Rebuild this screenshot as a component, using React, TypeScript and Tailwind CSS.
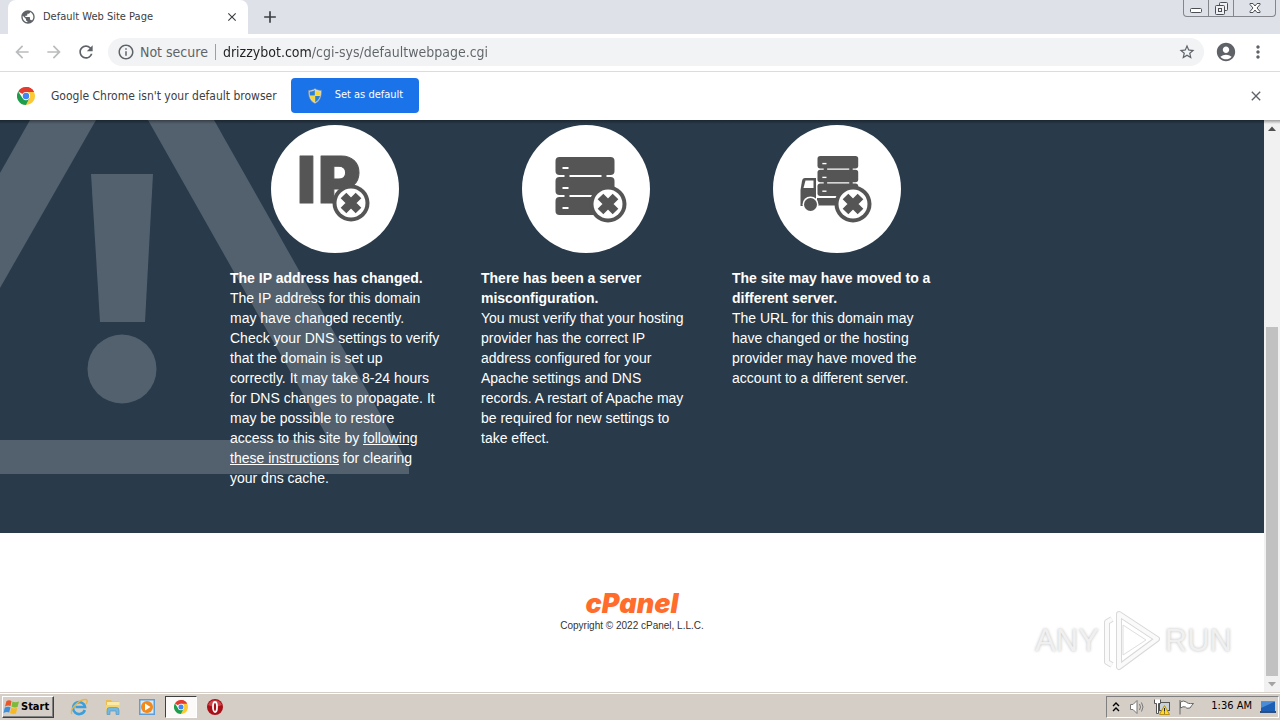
import React from 'react';
import {
  MdAccountCircle,
  MdAdd,
  MdArrowBack,
  MdArrowForward,
  MdClose,
  MdInfoOutline,
  MdMoreVert,
  MdPublic,
  MdRefresh,
  MdStarBorder,
} from 'react-icons/md';

const ChromeLogo = ({ className }: { className?: string }) => (
  <svg viewBox="0 0 48 48" className={className} aria-hidden="true">
    <path d="M24 24 L3.2 12 A24 24 0 0 1 44.8 12 Z" fill="#e33b2e" />
    <path d="M24 13 H45.3 L44.8 12 A24 24 0 0 0 24 0 Z" fill="#e33b2e" />
    <path d="M33.5 29.5 L24 48 A24 24 0 0 0 45.3 13 H24 Z" fill="#fcc934" />
    <path d="M14.5 29.5 L3.2 12 A24 24 0 0 0 24 48 L33.5 29.5 Z" fill="#1e9e4a" />
    <circle cx="24" cy="24" r="11" fill="#fff" />
    <circle cx="24" cy="24" r="8.6" fill="#4285f4" />
  </svg>
);

const ShieldIcon = () => (
  <svg viewBox="0 0 16 16" className="size-4" aria-hidden="true">
    <path d="M8 0.5 C10 2 12.5 2.4 14.5 2.4 C14.5 9 13 13 8 15.5 C3 13 1.5 9 1.5 2.4 C3.5 2.4 6 2 8 0.5Z" fill="#d5dbe2" stroke="#7c8794" strokeWidth="0.6" />
    <path d="M7.8 2 V7.6 H2.9 C2.7 6 2.6 5 2.6 3.6 C4.6 3.5 6.3 3 7.8 2Z" fill="#2a7fd4" />
    <path d="M8.2 2 V7.6 H13.1 C13.3 6 13.4 5 13.4 3.6 C11.4 3.5 9.7 3 8.2 2Z" fill="#f8d731" />
    <path d="M7.8 8 V14.2 C4.9 12.7 3.6 10.8 3 8Z" fill="#f8d731" />
    <path d="M8.2 8 V14.2 C11.1 12.7 12.4 10.8 13 8Z" fill="#2a7fd4" />
  </svg>
);

const CrossBadge = () => (
  <g>
    <circle cx="80" cy="78" r="18.5" fill="#555" />
    <circle cx="80" cy="78" r="14.5" fill="#fff" />
    <path d="M72.5 70.5 L87.5 85.5 M87.5 70.5 L72.5 85.5" stroke="#555" strokeWidth="8" />
  </g>
);

const IpIcon = () => (
  <svg viewBox="0 0 128 128" className="size-32" aria-hidden="true">
    <g fill="#555" fontFamily="Inter, sans-serif" fontWeight="900" fontSize="65" stroke="#555" strokeLinejoin="round">
      <text x="26" y="78">I</text>
      <text x="47" y="78">P</text>
    </g>
    <CrossBadge />
  </svg>
);

const ServerStack = () => (
  <g>
    <path d="M9 14 H14 V44 H9Z M46 14 H51 V44 H46Z" fill="#555" />
    {[0, 20, 40].map((y) => (
      <g key={y}>
        <rect x="0" y={y} width="59" height="18" rx="4" fill="#555" />
        <rect x="7" y={y + 10} width="6" height="2" fill="#fff" />
      </g>
    ))}
  </g>
);

const ServerIcon = () => (
  <svg viewBox="0 0 128 128" className="size-32" aria-hidden="true">
    <g transform="translate(33.5 32)">
      <ServerStack />
    </g>
    <g transform="translate(6 1)">
      <CrossBadge />
    </g>
  </svg>
);

const TruckIcon = () => (
  <svg viewBox="0 0 128 128" className="size-32" aria-hidden="true">
    <g transform="translate(44.5 31) scale(0.69)">
      <ServerStack />
    </g>
    <path d="M44 73 H70 V80.5 H44Z" fill="#555" />
    <path d="M32 53 H43 V81 H27.5 V65 L29 56 Q29.5 53 32 53Z" fill="#555" />
    <path d="M32.5 55.5 H40.5 V63 H30.5Z" fill="#fff" />
    <circle cx="37.5" cy="79.5" r="8" fill="#fff" />
    <circle cx="37.5" cy="79.5" r="6.5" fill="#555" />
    <g transform="translate(0 1)">
      <CrossBadge />
    </g>
  </svg>
);

const reasons = [
  {
    title: 'The IP address has changed.',
    icon: <IpIcon />,
    body: (
      <>
        The IP address for this domain may have changed recently. Check your DNS settings to verify that the domain is
        set up correctly. It may take 8-24 hours for DNS changes to propagate. It may be possible to restore access to
        this site by{' '}
        <a href="#instructions" className="underline">
          following these instructions
        </a>{' '}
        for clearing your dns cache.
      </>
    ),
  },
  {
    title: 'There has been a server misconfiguration.',
    icon: <ServerIcon />,
    body: 'You must verify that your hosting provider has the correct IP address configured for your Apache settings and DNS records. A restart of Apache may be required for new settings to take effect.',
  },
  {
    title: 'The site may have moved to a different server.',
    icon: <TruckIcon />,
    body: 'The URL for this domain may have changed or the hosting provider may have moved the account to a different server.',
  },
];

const WindowButtons = () => (
  <div className="mr-1 flex h-[17px] rounded-b border border-t-0 border-[#84868c] text-[#4b4e55]">
    <button aria-label="Minimize" className="flex w-[25px] items-center justify-center border-r border-[#84868c]">
      <svg viewBox="0 0 12 12" className="size-3" fill="none" stroke="currentColor">
        <rect x="0.5" y="6.5" width="11" height="4" rx="1" fill="#fff" />
      </svg>
    </button>
    <button aria-label="Restore" className="flex w-[25px] items-center justify-center border-r border-[#84868c]">
      <svg viewBox="0 0 13 13" className="size-[13px]" fill="#eef0f4" stroke="currentColor">
        <rect x="4.5" y="0.5" width="8" height="8" rx="1" />
        <rect x="0.5" y="3.5" width="9" height="9" rx="1" />
        <rect x="3.5" y="6.5" width="3" height="3" />
      </svg>
    </button>
    <button aria-label="Close window" className="flex w-[41px] items-center justify-center">
      <svg viewBox="0 0 12 12" className="size-3" fill="#fff" stroke="currentColor">
        <path d="M1 1.5 H4 L6 4 L8 1.5 H11 V2.5 L8 6 L11 9.5 V10.5 H8 L6 8 L4 10.5 H1 V9.5 L4 6 L1 2.5Z" />
      </svg>
    </button>
  </div>
);

const TabStrip = () => (
  <div className="flex h-[34px] items-start bg-[#dee1e8] pl-2">
    <div className="flex h-[34px] w-60 items-center rounded-t-lg bg-white pr-2 pl-3">
      <MdPublic className="size-4 shrink-0 text-[#5f6368]" />
      <span className="ml-[7px] flex-1 text-[11px] text-[#3c4043]">Default Web Site Page</span>
      <button aria-label="Close tab" className="flex size-4 items-center justify-center text-[#3c4043]">
        <MdClose className="size-[14px] stroke-current" />
      </button>
    </div>
    <button aria-label="New tab" className="ml-3 flex h-[34px] items-center text-[#3c4043]">
      <MdAdd className="size-5" />
    </button>
    <div className="flex-1" />
    <WindowButtons />
  </div>
);

const Toolbar = () => (
  <div className="flex h-[38px] items-center border-b border-[#dcdcdc] bg-white px-3 pb-px">
    <button aria-label="Back" className="mr-3 text-[#babcbe]">
      <MdArrowBack className="size-5" />
    </button>
    <button aria-label="Forward" className="mr-3 text-[#babcbe]">
      <MdArrowForward className="size-5" />
    </button>
    <button aria-label="Reload" className="mr-3 text-[#5f6368]">
      <MdRefresh className="size-5 stroke-current" />
    </button>
    <div className="flex h-7 flex-1 items-center rounded-full bg-[#f1f3f4] px-2 text-sm">
      <MdInfoOutline className="size-5 shrink-0 p-px text-[#5f6368]" />
      <span className="ml-1 text-[#5f6368]">Not secure</span>
      <div className="mx-[7px] h-4 w-px bg-[#9aa0a6]" />
      <input
        type="text"
        aria-label="Address"
        defaultValue="drizzybot.com/cgi-sys/defaultwebpage.cgi"
        className="min-w-0 flex-1 bg-[linear-gradient(to_right,#202124_88px,#5f6368_88px)] bg-clip-text text-transparent outline-none"
      />
      <button aria-label="Bookmark this page" className="text-[#5f6368]">
        <MdStarBorder className="size-[18px]" />
      </button>
    </div>
    <button aria-label="Profile" className="ml-[11px] text-[#5f6368]">
      <MdAccountCircle className="size-[22px]" />
    </button>
    <button aria-label="Menu" className="ml-[11px] text-[#5f6368]">
      <MdMoreVert className="size-5" />
    </button>
  </div>
);

const InfoBar = () => (
  <div className="flex h-12 items-center bg-white pr-4 pb-px pl-[17px] text-[#3c4043]">
    <ChromeLogo className="size-[18px]" />
    <span className="ml-4 text-xs">Google Chrome isn't your default browser</span>
    <button className="ml-[14px] flex h-[35px] items-center gap-3 rounded bg-[#1a73e8] px-4 text-[11px] text-white">
      <ShieldIcon />
      Set as default
    </button>
    <div className="flex-1" />
    <button aria-label="Dismiss" className="text-[#5f6368]">
      <MdClose className="size-4 stroke-current" />
    </button>
  </div>
);

const WarningSign = () => (
  <svg viewBox="0 0 410 354" className="absolute top-0 left-0 h-[354px] w-[410px]" fill="#53616e" aria-hidden="true">
    <path d="M30 0 H96 L0 168 V53Z" />
    <path d="M148 0 H214 L409 345 V354 H0 V320 H329Z" />
    <path d="M91 54 H153 L145 202 H100Z" />
    <circle cx="122" cy="249" r="34.5" />
  </svg>
);

const Scrollbar = () => (
  <div className="flex w-4 shrink-0 flex-col items-center bg-[#f1f1f1]">
    <svg viewBox="0 0 16 16" className="size-4" fill="#505050">
      <path d="M4 11 L8 6.5 L12 11Z" />
    </svg>
    <div className="flex-1" />
    <div className="h-[349px] w-3 bg-[#c1c1c1]" />
    <svg viewBox="0 0 16 16" className="size-4" fill="#a3a3a3">
      <path d="M4 6 L8 10.5 L12 6Z" />
    </svg>
  </div>
);

const Watermark = () => (
  <div className="absolute right-12 bottom-5 flex items-center gap-1 font-['Liberation_Sans_Narrow','Liberation_Sans',sans-serif] text-[31px] leading-[60px] text-[#f0f0f0] [text-shadow:0_0_3px_#bbb]">
    <span>ANY</span>
    <svg viewBox="0 0 58 62" className="h-[62px] w-[58px]" fill="none" aria-hidden="true">
      <g stroke="#d9d9d9" strokeWidth="6" strokeLinejoin="round">
        <path d="M16 4 L54 29 L16 57Z" />
        <path d="M9 9 L4 12 V52 L9 55" />
      </g>
      <g stroke="#fafafa" strokeWidth="4" strokeLinejoin="round">
        <path d="M16 4 L54 29 L16 57Z" />
        <path d="M9 9 L4 12 V52 L9 55" />
      </g>
      <path d="M20 15 V45 L43 30Z" stroke="#dedede" />
    </svg>
    <span>RUN</span>
  </div>
);

const Page = () => (
  <div className="relative flex flex-1 overflow-hidden bg-white font-['Liberation_Sans',Arial,sans-serif]">
    <div className="flex-1">
      <section className="relative bg-[#293a4a] pt-[5px] pb-[45px] text-sm leading-5 text-white">
        <WarningSign />
        <div className="relative mx-auto flex max-w-[804px] gap-[41px]">
          {reasons.map((reason) => (
            <div key={reason.title} className="w-[210px]">
              <div className="mx-auto mb-[15px] size-32 rounded-full bg-white">{reason.icon}</div>
              <h2 className="font-bold">{reason.title}</h2>
              <p>{reason.body}</p>
            </div>
          ))}
        </div>
      </section>
      <footer className="flex flex-col items-center pt-[57px] text-[#333]">
        <a href="#cpanel" className="font-['Inter',sans-serif] text-[27px] leading-7 font-black text-[#ff6c2c] italic">
          cPanel
        </a>
        <p className="text-[10px] leading-4">Copyright © 2022 cPanel, L.L.C.</p>
      </footer>
    </div>
    <Scrollbar />
    <div className="absolute inset-x-0 top-0 h-1 bg-linear-to-b from-black/35 to-transparent" />
    <Watermark />
  </div>
);

const WindowsFlag = () => (
  <svg viewBox="0 0 17 16" className="h-4 w-[17px]" aria-hidden="true">
    <path d="M3.5 2 Q6 0.5 8.5 2 L7.5 7 Q5 6 2 7.5Z" fill="#e8562a" />
    <path d="M9.5 2.5 Q12 4 16 2.5 L14.5 8 Q11.5 9 8.5 7.5Z" fill="#7db93b" />
    <path d="M1.8 8.5 Q5 7 7.5 8.2 L6.2 13.5 Q3.5 12.5 0.5 14Z" fill="#3d8edb" />
    <path d="M8.3 8.7 Q11 10 14.2 9 L13 14.5 Q10 15.5 7 14Z" fill="#f6b922" />
  </svg>
);

const ExplorerIcon = () => (
  <svg viewBox="0 0 18 18" className="size-[18px]" fill="none" aria-hidden="true">
    <path d="M14.8 12 A6 6 0 1 1 15 9 H5.5" stroke="#3a9fdc" strokeWidth="2.6" />
    <path d="M2 16 C-1 12 9 1 16 1.5 C18 2 17 5 16 6" stroke="#e9b440" strokeWidth="1.3" />
  </svg>
);

const FolderIcon = () => (
  <svg viewBox="0 0 18 18" className="size-[18px]" aria-hidden="true">
    <path d="M2 2 H7 L8 3.5 H15 V13 H2Z" fill="#e8bd55" />
    <path d="M3 4 H15.5 V9 H3Z" fill="#fbeaa5" />
    <path d="M2 7 H16 V13 H2Z" fill="#f4d574" />
    <path d="M3 16.500 V12 Q3 9.500 5.500 9.500 H12.500 Q15 9.500 15 12 V16.500 H12 V13 H6 V16.500Z" fill="#75b8df" stroke="#4c91c2" strokeWidth="0.6" />
  </svg>
);

const PlayerIcon = () => (
  <svg viewBox="0 0 18 18" className="size-[18px]" aria-hidden="true">
    <rect x="1" y="1" width="16" height="16" fill="#5f9dd6" />
    <rect x="2.5" y="2.5" width="13" height="13" fill="#d7e8f7" />
    <circle cx="9" cy="9" r="6" fill="#f08a1c" />
    <path d="M7 5.5 L12.5 9 L7 12.5Z" fill="#fff" />
  </svg>
);

const OperaIcon = () => (
  <svg viewBox="0 0 18 18" className="size-[18px]" aria-hidden="true">
    <circle cx="9" cy="9" r="8" fill="#a90f17" />
    <path d="M2 7 A7.5 7.5 0 0 1 16 7 Q9 10 2 7Z" fill="#cf454c" />
    <ellipse cx="9" cy="9" rx="2" ry="5" fill="#a90f17" stroke="#fff" strokeWidth="1.8" />
  </svg>
);

const Tray = () => (
  <div className="flex h-[22px] items-center border border-t-[#808080] border-r-white border-b-white border-l-[#808080] pr-[2px] pl-1">
    <button aria-label="Show hidden icons" className="mr-2">
      <svg viewBox="0 0 10 12" className="h-3 w-2.5" fill="none" stroke="#000" strokeWidth="1.4">
        <path d="M2 5 L5 2 L8 5 M2 10 L5 7 L8 10" />
      </svg>
    </button>
    <button aria-label="Volume" className="mr-2">
      <svg viewBox="0 0 17 16" className="h-4 w-[17px]" fill="#fff" stroke="#777">
        <path d="M1.5 5.5 H4 L8 1.5 V14.5 L4 10.5 H1.5Z" />
        <path d="M10.5 5 Q12.5 8 10.5 11 M12.5 3.5 Q15.5 8 12.5 12.5" fill="none" />
      </svg>
    </button>
    <button aria-label="Network" className="mr-2">
      <svg viewBox="0 0 16 16" className="size-4" aria-hidden="true">
        <rect x="5.5" y="3.5" width="10" height="8" fill="#c8d0d8" stroke="#555" />
        <path d="M0.5 0.5 V4.5 H2.5 V14.5 H4.5 V4.5 H6.5 V0.5" fill="#fff" stroke="#555" />
        <path d="M10.5 6.5 L15.5 15.5 H5.5Z" fill="#ffd923" stroke="#b8921a" />
        <path d="M10.5 9 V12.5 M10.5 13.5 V14.5" stroke="#222" />
      </svg>
    </button>
    <button aria-label="Action center" className="mr-4">
      <svg viewBox="0 0 17 16" className="h-4 w-[17px]" fill="#fff" stroke="#666">
        <path d="M2.5 3 Q5 1 8.5 3 Q9 5 15.5 4.5 Q13.5 6.5 12 9 Q8 10 7.5 8 Q5 7 2.5 9Z" />
        <path d="M2 1 V15.5" />
      </svg>
    </button>
    <time className="text-[11px]">1:36 AM</time>
    <button aria-label="Show desktop" className="ml-2">
      <svg viewBox="0 0 16 14" className="h-3.5 w-4">
        <path d="M1 1.5 H15 V11 H1Z" fill="#1d5fb4" />
        <path d="M1 1.5 H15 L1 8Z" fill="#4a8cd6" />
        <path d="M0 11 H16 V13 H0Z" fill="#2c4f7f" />
      </svg>
    </button>
  </div>
);

const Taskbar = () => (
  <footer className="flex h-7 shrink-0 items-center border-t border-[#d5cec6] bg-[#d5cec6] pr-px pl-0.5 text-black shadow-[inset_0_1px_0_#fff]">
    <button className="mr-4 flex h-[22px] w-[52px] items-center gap-px border border-t-white border-r-[#404040] border-b-[#404040] border-l-white pt-px text-[11px] font-bold shadow-[inset_-1px_-1px_0_#808080]">
      <WindowsFlag />
      Start
    </button>
    <button aria-label="Internet Explorer" className="mr-4">
      <ExplorerIcon />
    </button>
    <button aria-label="Windows Explorer" className="mr-4">
      <FolderIcon />
    </button>
    <button aria-label="Media Player" className="mr-[9px]">
      <PlayerIcon />
    </button>
    <button
      aria-label="Google Chrome"
      className="mr-[9px] flex h-[22px] w-8 items-center justify-center border border-t-[#404040] border-r-white border-b-white border-l-[#404040] bg-[#fbfaf9]"
    >
      <ChromeLogo className="size-[14px]" />
    </button>
    <button aria-label="Opera">
      <OperaIcon />
    </button>
    <div className="flex-1" />
    <Tray />
  </footer>
);

export default function App() {
  return (
    <div className="flex min-h-screen flex-col font-['DejaVu_Sans_Condensed','DejaVu_Sans',Tahoma,sans-serif]">
      <header>
        <TabStrip />
        <Toolbar />
        <InfoBar />
      </header>
      <Page />
      <Taskbar />
    </div>
  );
}
